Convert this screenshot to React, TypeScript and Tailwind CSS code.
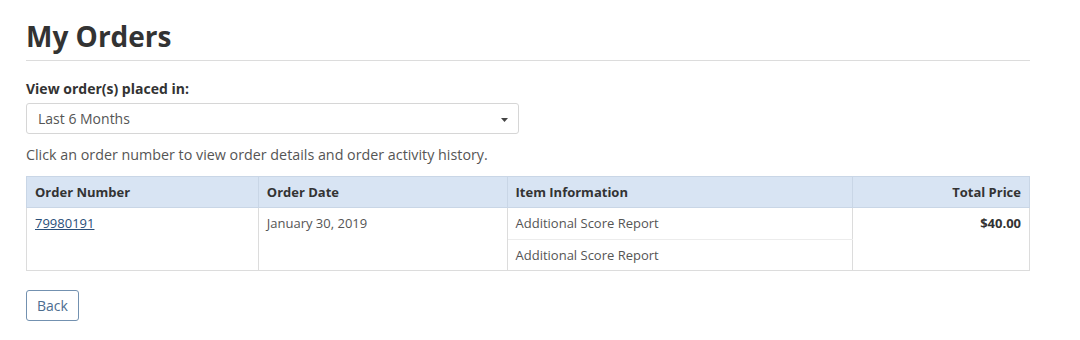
const rows = ['Additional Score Report', 'Additional Score Report']

export default function App() {
  return (
    <div className="min-h-[340px] bg-white px-[26px] text-[#555] [font-family:'Open_Sans',sans-serif]">
      <div className="w-[1004px]">
        <h1 className="border-b border-[#dcdcdc] pt-[19px] pb-[7px] text-[28px] font-bold leading-[34px] text-[#333]">
          My Orders
        </h1>

        <label className="mt-[18px] block text-[14px] font-bold leading-[20px] text-[#333]">
          View order(s) placed in:
        </label>
        <div className="mt-[4px] flex h-[31px] w-[493px] items-center justify-between rounded-[3px] border border-[#d6d6d6] pl-[11px] pr-[10px] text-[14px] text-[#555]">
          <span>Last 6 Months</span>
          <svg width="7" height="4" viewBox="0 0 7 4" className="mt-[2px]">
            <path d="M0 0h7L3.5 4z" fill="#444" />
          </svg>
        </div>

        <p className="mt-[11px] text-[14.3px] leading-[20px] text-[#555]">
          Click an order number to view order details and order activity history.
        </p>

        <table className="mt-[11px] w-full border-collapse border border-[#dcdcdc] text-[13px] leading-[16px]">
          <colgroup>
            <col className="w-[232px]" />
            <col className="w-[249px]" />
            <col className="w-[346px]" />
            <col className="w-[177px]" />
          </colgroup>
          <thead>
            <tr className="bg-[#d8e4f3] text-[#333]">
              <th className="border border-[#c9d6e6] px-[8px] py-[7px] text-left font-bold">Order Number</th>
              <th className="border border-[#c9d6e6] px-[8px] py-[7px] text-left font-bold">Order Date</th>
              <th className="border border-[#c9d6e6] px-[8px] py-[7px] text-left font-bold">Item Information</th>
              <th className="border border-[#c9d6e6] px-[8px] py-[7px] text-right font-bold">Total Price</th>
            </tr>
          </thead>
          <tbody className="leading-[17px]">
            <tr>
              <td rowSpan={2} className="border border-[#dcdcdc] px-[8px] py-[7px] align-top">
                <a href="#" className="text-[#2a4f7a] underline">79980191</a>
              </td>
              <td rowSpan={2} className="border border-[#dcdcdc] px-[8px] py-[7px] align-top">
                January 30, 2019
              </td>
              <td className="border border-b-[#ececec] border-[#dcdcdc] px-[8px] py-[7px]">{rows[0]}</td>
              <td rowSpan={2} className="border border-[#dcdcdc] px-[8px] py-[7px] text-right align-top font-bold text-[#333]">
                $40.00
              </td>
            </tr>
            <tr>
              <td className="border border-[#dcdcdc] px-[8px] pt-[7px] pb-[6px]">{rows[1]}</td>
            </tr>
          </tbody>
        </table>

        <button className="mt-[19px] h-[31px] w-[53px] rounded-[3px] border border-[#7391b0] text-[14px] text-[#4d6d8f]">
          Back
        </button>
      </div>
    </div>
  )
}
